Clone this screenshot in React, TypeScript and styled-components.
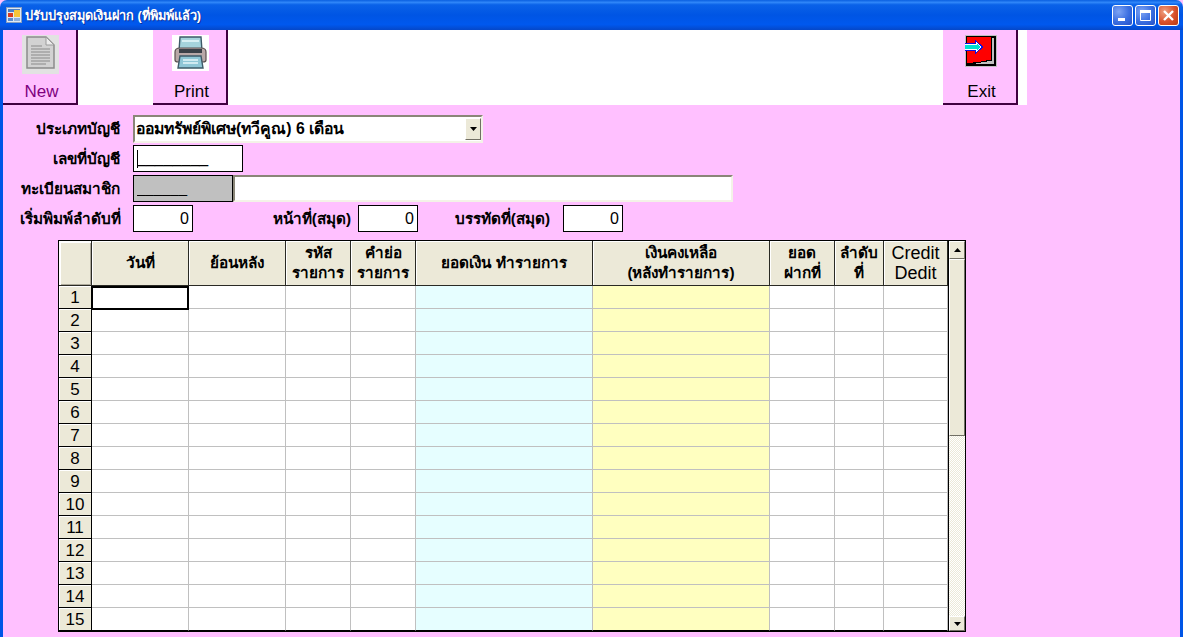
import React from 'react';
import styled, { createGlobalStyle } from 'styled-components';

const FONT = `"Liberation Sans", "Noto Sans", sans-serif`;

const GlobalStyle = createGlobalStyle`
  html, body { margin: 0; padding: 0; background: #ffc0ff; }
  body { font-family: ${FONT}; overflow: hidden; }
  * { box-sizing: border-box; }
`;

const Win = styled.div`
  width: 1183px;
  height: 637px;
  display: flex;
  flex-direction: column;
  overflow: hidden;
`;

const TitleBar = styled.div`
  height: 30px;
  flex: none;
  display: flex;
  align-items: center;
  padding: 0 4px 0 6px;
  border-radius: 7px 7px 0 0;
  background: linear-gradient(180deg, #0a5fe0 0%, #2f86f8 8%, #0a62e8 16%, #0055e4 50%, #0058ee 82%, #0547c8 100%);
  color: #fff;
  font-size: 12.8px;
  font-weight: bold;
  text-shadow: 1px 1px 0 #0a2f9c;
`;

const TitleText = styled.span`
  margin-left: 3px;
  flex: 1;
`;

const CtlBtn = styled.div<{ $close?: boolean }>`
  width: 21px;
  height: 21px;
  margin-left: 2px;
  border: 1px solid #fff;
  border-radius: 3px;
  display: flex;
  align-items: center;
  justify-content: center;
  background: ${p => p.$close
    ? 'radial-gradient(circle at 30% 30%, #f0a080 0%, #d8512c 55%, #b83a12 100%)'
    : 'radial-gradient(circle at 30% 30%, #7da4f4 0%, #3a6ee0 55%, #2450c8 100%)'};
`;

const Body = styled.div`
  flex: 1;
  min-height: 0;
  background: #ffc0ff;
  border-left: 3px solid #0055e6;
  border-right: 3px solid #0055e6;
  display: flex;
  flex-direction: column;
`;

const Toolbar = styled.div`
  width: 1024px;
  height: 75px;
  flex: none;
  background: #fff;
  display: flex;
  padding-right: 9px;
`;

const ToolBtn = styled.div<{ $offset?: string; $color?: string }>`
  width: 75px;
  height: 75px;
  margin-left: ${p => p.$offset || '0'};
  background: #ffc0ff;
  border-right: 2px solid #400040;
  border-bottom: 2px solid #400040;
  display: flex;
  flex-direction: column;
  align-items: center;
  color: ${p => p.$color || '#000'};
  font-size: 17px;
  padding-left: 2px;
`;

const IconSlot = styled.div`
  height: 47px;
  padding-top: 5px;
  flex: none;
`;

const ToolLabel = styled.span`
  line-height: 20px;
  margin-top: 5px;
  padding-left: 2px;
`;

const Form = styled.div`
  padding-top: 10px;
  display: flex;
  flex-direction: column;
  gap: 3px;
`;

const FormRow = styled.div`
  display: flex;
  align-items: center;
  height: 27px;
`;

const Label = styled.label<{ $width: number }>`
  width: ${p => p.$width}px;
  flex: none;
  text-align: right;
  font-size: 15.3px;
  font-weight: bold;
  color: #000;
  white-space: nowrap;
`;

const Combo = styled.div`
  width: 350px;
  height: 28px;
  margin-left: 13px;
  background: #fff;
  border: 2px solid;
  border-color: #8a8678 #f4f2e8 #f4f2e8 #8a8678;
  display: flex;
  align-items: stretch;
  font-size: 15.8px;
  font-weight: bold;
`;

const ComboText = styled.span`
  flex: 1;
  padding-left: 1px;
  line-height: 23px;
`;

const ComboBtn = styled.div`
  width: 16px;
  margin: 1px 0;
  background: #ece9d8;
  border: 1px solid;
  border-color: #fff #716f64 #716f64 #fff;
  display: flex;
  align-items: center;
  justify-content: center;
`;

const Field = styled.div<{ $width: number; $gap?: number; $grey?: boolean }>`
  width: ${p => p.$width}px;
  height: 27px;
  margin-left: ${p => p.$gap ?? 13}px;
  flex: none;
  border: 1px solid #000;
  background: ${p => (p.$grey ? '#c0c0c0' : '#fff')};
  color: #000;
  font-size: 16px;
  line-height: 26px;
  position: relative;
`;

const SunkenField = styled.div`
  width: 500px;
  height: 27px;
  flex: none;
  background: #fff;
  border: 2px solid;
  border-color: #8a8678 #f4f2e8 #f4f2e8 #8a8678;
`;

const Mask = styled.span<{ $size: number }>`
  display: block;
  margin-left: 3px;
  height: 24px;
  line-height: 23px;
  font-size: ${p => p.$size}px;
  overflow: hidden;
`;

const Caret = styled.i`
  position: absolute;
  left: 3px;
  top: 4px;
  width: 1px;
  height: 18px;
  background: #000;
`;

const NumValue = styled.div`
  text-align: right;
  padding-right: 3px;
`;

const Table = styled.div`
  margin: 8px 0 0 55px;
  width: 908px;
  height: 392px;
  flex: none;
  border: 1px solid #000;
  display: flex;
`;

const Grid = styled.div`
  width: 890px;
  border-right: 1px solid #000;
  display: grid;
  grid-template-columns: 33px 97px 97px 65px 65px 177px 177px 65px 49px 64px;
  grid-template-rows: 45px repeat(15, 23px);
  position: relative;
`;

const Head = styled.div`
  background: #ece9d8;
  border-right: 1px solid #2a2a24;
  border-bottom: 1px solid #2a2a24;
  box-shadow: inset 1px 1px 0 #fff;
  display: flex;
  align-items: center;
  justify-content: center;
  text-align: center;
  font-size: 15.3px;
  font-weight: bold;
  line-height: 20px;
  white-space: pre-line;
`;

const PlainHead = styled(Head)`
  font-size: 18px;
  font-weight: normal;
`;

const Corner = styled(Head)`
  box-shadow: inset 2px 2px 0 #fff, inset -1px -1px 0 #aca899;
`;

const RowHead = styled.div`
  background: #ece9d8;
  border-right: 1px solid #000;
  border-bottom: 1px solid #000;
  box-shadow: inset 1px 1px 0 #fff;
  font-size: 17px;
  line-height: 24px;
  text-align: center;
`;

const Cell = styled.div<{ $tint?: string; $last?: boolean }>`
  background: ${p => p.$tint || '#fff'};
  border-right: 1px solid #c0c0c0;
  border-bottom: 1px solid ${p => (p.$last ? '#000' : '#c0c0c0')};
`;

const ActiveCell = styled.div`
  position: absolute;
  left: 32px;
  top: 45px;
  width: 98px;
  height: 24px;
  border: 2px solid #000;
  pointer-events: none;
`;

const ScrollBar = styled.div`
  width: 16px;
  flex: none;
  display: flex;
  flex-direction: column;
  background: repeating-conic-gradient(#ece9d8 0 25%, #fff 0 50%) 0 0 / 2px 2px;
`;

const ScrollBtn = styled.div<{ $h: number }>`
  height: ${p => p.$h}px;
  flex: none;
  background: #ece9d8;
  border: 1px solid;
  border-color: #fff #716f64 #716f64 #fff;
  display: flex;
  align-items: center;
  justify-content: center;
`;

const Thumb = styled.div`
  height: 177px;
  flex: none;
  background: #ece9d8;
  border: 1px solid;
  border-color: #fff #716f64 #716f64 #fff;
`;

const ScrollSpace = styled.div`
  flex: 1;
`;

const AppIcon = () => (
  <svg width="16" height="16" viewBox="0 0 16 16">
    <rect x="0.5" y="0.5" width="15" height="15" fill="#dfe8f4" stroke="#8a9fc0" />
    <rect x="2" y="2" width="12" height="3" fill="#4a7fc8" />
    <rect x="2" y="6" width="5" height="4" fill="#d83a20" />
    <rect x="8" y="3" width="6" height="7" fill="#f6c53a" />
    <rect x="2" y="11" width="5" height="3" fill="#5a8ad0" />
    <rect x="8" y="11" width="6" height="3" fill="#8fb0dc" />
  </svg>
);

const NewIcon = () => (
  <svg width="37" height="39" viewBox="0 0 37 39">
    <rect width="37" height="39" fill="#e2e2e2" />
    <path d="M5 2 H24 L32 10 V33 H5 Z" fill="#d2d2d2" stroke="#8c8c8c" strokeWidth="1.5" />
    <path d="M24 2 V10 H32 Z" fill="#ececec" stroke="#9a9a9a" />
    <path d="M9 11 H20 M9 14 H28 M9 17 H28 M9 20 H28 M9 23 H28 M9 26 H28 M9 29 H24" stroke="#a2a2a2" strokeWidth="1.3" />
  </svg>
);

const PrintIcon = () => (
  <svg width="37" height="36" viewBox="0 0 37 36">
    <rect width="37" height="36" fill="#fff" />
    <path d="M8 2 H29 L30 16 H7 Z" fill="#a5d3dc" stroke="#3e5a68" strokeWidth="1.4" />
    <path d="M10 6 H27" stroke="#d8f0f4" strokeWidth="2" />
    <path d="M3 17 Q3 13 8 13 H29 Q34 13 34 17 V25 Q34 27 31 27 H6 Q3 27 3 25 Z" fill="#b8a8a8" stroke="#5a5050" strokeWidth="1.2" />
    <rect x="7" y="14" width="23" height="4" fill="#3a4048" />
    <path d="M8 21 H29 L31 33 H6 Z" fill="#8fc6d6" stroke="#3e5a68" strokeWidth="1.4" />
    <path d="M11 25 H26 M11 28 H26" stroke="#e6f6fa" strokeWidth="1.4" />
  </svg>
);

const ExitIcon = () => (
  <svg width="32" height="32" viewBox="0 0 32 32" shapeRendering="crispEdges">
    <rect width="32" height="32" fill="#c0c0c0" />
    <rect x="1" y="1" width="30" height="30" fill="#000" />
    <path d="M2 2 H26 V25 L16 26 V27 L8 27 V28 H2 Z" fill="#ff0000" />
    <path d="M27 3 H29 V29 H6 V29 L16 28 V27 L27 26 Z" fill="#c0c0c0" />
    <path d="M0 8 H10 V5 L19 12 L10 19 V16 H0 Z" fill="#1010e0" />
    <path d="M0 9 H11 V7 L17 12 L11 17 V15 H0 Z" fill="#fff" />
    <path d="M0 10 H12 V9 L16 12 L12 15 V14 H0 Z" fill="#00e0d0" />
  </svg>
);

const Arrow = ({ down }: { down?: boolean }) => (
  <svg width="7" height="4" viewBox="0 0 7 4">
    <path d={down ? 'M0 0 H7 L3.5 4 Z' : 'M0 4 H7 L3.5 0 Z'} fill="#000" />
  </svg>
);

const columns: { title: string; plain?: boolean; tint?: string }[] = [
  { title: 'วันที่' },
  { title: 'ย้อนหลัง' },
  { title: 'รหัส\nรายการ' },
  { title: 'คำย่อ\nรายการ' },
  { title: 'ยอดเงิน ทำรายการ', tint: '#e6feff' },
  { title: 'เงินคงเหลือ\n(หลังทำรายการ)', tint: '#ffffc0' },
  { title: 'ยอด\nฝากที่' },
  { title: 'ลำดับ\nที่' },
  { title: 'Credit\nDedit', plain: true },
];

const rows = Array.from({ length: 15 }, (_, i) => i + 1);

export default function App() {
  return (
    <Win>
      <GlobalStyle />
      <TitleBar>
        <AppIcon />
        <TitleText>ปรับปรุงสมุดเงินฝาก (ที่พิมพ์แล้ว)</TitleText>
        <CtlBtn>
          <svg width="15" height="15" viewBox="0 0 15 15"><rect x="3" y="10" width="7" height="3" fill="#fff" /></svg>
        </CtlBtn>
        <CtlBtn>
          <svg width="15" height="15" viewBox="0 0 15 15"><path d="M2.5 2.5 H12.5 V12.5 H2.5 Z" fill="none" stroke="#fff" /><rect x="2" y="2" width="11" height="3" fill="#fff" /></svg>
        </CtlBtn>
        <CtlBtn $close>
          <svg width="15" height="15" viewBox="0 0 15 15"><path d="M3 3 L12 12 M12 3 L3 12" stroke="#fff" strokeWidth="2.4" /></svg>
        </CtlBtn>
      </TitleBar>
      <Body>
        <Toolbar>
          <ToolBtn $color="#800080">
            <IconSlot><NewIcon /></IconSlot>
            <ToolLabel>New</ToolLabel>
          </ToolBtn>
          <ToolBtn $offset="75px">
            <IconSlot><PrintIcon /></IconSlot>
            <ToolLabel>Print</ToolLabel>
          </ToolBtn>
          <ToolBtn $offset="auto">
            <IconSlot><ExitIcon /></IconSlot>
            <ToolLabel>Exit</ToolLabel>
          </ToolBtn>
        </Toolbar>
        <Form>
          <FormRow>
            <Label $width={117}>ประเภทบัญชี</Label>
            <Combo>
              <ComboText>ออมทรัพย์พิเศษ(ทวีคูณ) 6 เดือน</ComboText>
              <ComboBtn><Arrow down /></ComboBtn>
            </Combo>
          </FormRow>
          <FormRow>
            <Label $width={117}>เลขที่บัญชี</Label>
            <Field $width={110}>
              <Caret />
              <Mask $size={16}>________</Mask>
            </Field>
          </FormRow>
          <FormRow>
            <Label $width={117}>ทะเบียนสมาชิก</Label>
            <Field $width={100} $grey>
              <Mask $size={15}>______</Mask>
            </Field>
            <SunkenField />
          </FormRow>
          <FormRow>
            <Label $width={118}>เริ่มพิมพ์ลำดับที่</Label>
            <Field $width={60} $gap={12}><NumValue>0</NumValue></Field>
            <Label $width={158}>หน้าที่(สมุด)</Label>
            <Field $width={60} $gap={7}><NumValue>0</NumValue></Field>
            <Label $width={132}>บรรทัดที่(สมุด)</Label>
            <Field $width={60} $gap={13}><NumValue>0</NumValue></Field>
          </FormRow>
        </Form>
        <Table>
          <Grid>
            <Corner />
            {columns.map(col =>
              col.plain
                ? <PlainHead key={col.title}>{col.title}</PlainHead>
                : <Head key={col.title}>{col.title}</Head>
            )}
            {rows.map(row => (
              <React.Fragment key={row}>
                <RowHead>{row}</RowHead>
                {columns.map(col => (
                  <Cell key={col.title} $tint={col.tint} $last={row === 15} />
                ))}
              </React.Fragment>
            ))}
            <ActiveCell />
          </Grid>
          <ScrollBar>
            <ScrollBtn $h={18}><Arrow /></ScrollBtn>
            <Thumb />
            <ScrollSpace />
            <ScrollBtn $h={15}><Arrow down /></ScrollBtn>
          </ScrollBar>
        </Table>
      </Body>
    </Win>
  );
}
